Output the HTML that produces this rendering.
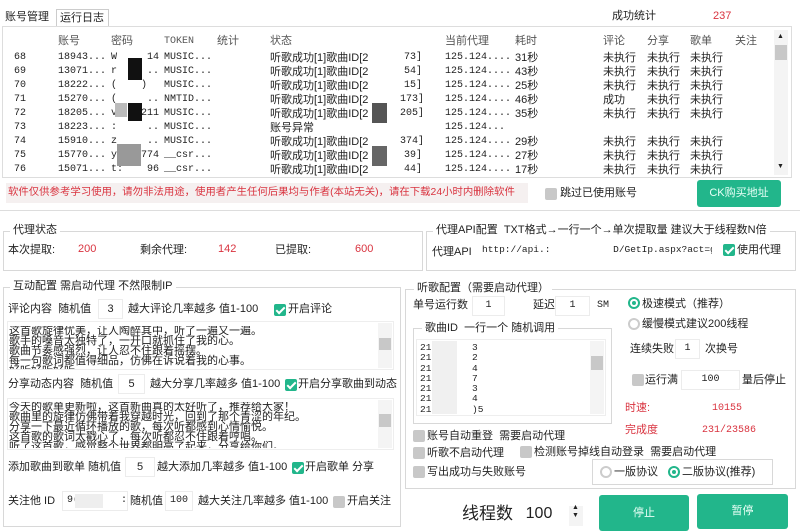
<!DOCTYPE html>
<html><head><meta charset="utf-8">
<style>
*{margin:0;padding:0;box-sizing:border-box}
body{width:800px;height:532px;background:#fff;position:relative;overflow:hidden;font-family:"Liberation Sans","Noto Sans CJK SC",sans-serif;font-size:11px;color:#222}
.t{position:absolute;white-space:nowrap;line-height:14px}
.m{font-family:"Liberation Mono","Noto Sans CJK SC",monospace;font-size:10px}
.r{color:#d9333f}
.box{position:absolute;border:1px solid #d8d8d8}
.inp{position:absolute;background:#fff;border:1px solid #ececec;text-align:center;line-height:18px;height:20px;white-space:nowrap;overflow:hidden}
.cb{position:absolute;width:12px;height:12px;background:#c8c8c8;border-radius:2px}
.cb.on{background:#22b68b}
.cb.on::after{content:"";position:absolute;left:4px;top:1px;width:3px;height:7px;border:solid #fff;border-width:0 2px 2px 0;transform:rotate(45deg)}
.rd{position:absolute;width:12px;height:12px;border-radius:50%;border:2px solid #ccc;background:#fff}
.rd.on{border-color:#22b68b}
.rd.on::after{content:"";position:absolute;left:2px;top:2px;width:4px;height:4px;border-radius:50%;background:#22b68b}
.btn{position:absolute;background:#22b68b;color:#e8fff6;border-radius:3px;text-align:center}
.leg{position:absolute;background:#fff;padding:0 3px;white-space:nowrap;line-height:14px}
.sb{position:absolute;background:#f4f4f4}
.ta{position:absolute;font-size:11px;line-height:10px;overflow:hidden;white-space:nowrap}
</style></head><body>
<div class="t" style="left:5px;top:10px;font-size:11px">账号管理</div>
<div style="position:absolute;left:56px;top:9px;width:53px;height:18px;border:1px solid #ccc;border-bottom:none"></div>
<div class="t" style="left:60px;top:11px">运行日志</div>
<div class="t" style="left:612px;top:9px">成功统计</div>
<div class="t r" style="left:713px;top:9px">237</div>
<div class="box" style="left:2px;top:26px;width:790px;height:152px;border-color:#ddd"></div>
<div class="t" style="left:58px;top:34px;color:#555">账号</div>
<div class="t" style="left:111px;top:34px;color:#555">密码</div>
<div class="t m" style="left:164px;top:35px;color:#555">TOKEN</div>
<div class="t" style="left:217px;top:34px;color:#555">统计</div>
<div class="t" style="left:270px;top:34px;color:#555">状态</div>
<div class="t" style="left:445px;top:34px;color:#555">当前代理</div>
<div class="t" style="left:515px;top:34px;color:#555">耗时</div>
<div class="t" style="left:603px;top:34px;color:#555">评论</div>
<div class="t" style="left:647px;top:34px;color:#555">分享</div>
<div class="t" style="left:690px;top:34px;color:#555">歌单</div>
<div class="t" style="left:735px;top:34px;color:#555">关注</div>
<div class="sb" style="left:774px;top:30px;width:14px;height:145px"></div>
<div class="t" style="left:777px;top:30px;font-size:7px">▲</div>
<div style="position:absolute;left:775px;top:45px;width:12px;height:15px;background:#c8c8c8"></div>
<div class="t" style="left:777px;top:160px;font-size:7px">▼</div>
<div class="t m" style="left:14px;top:51px;line-height:14px">68<br>69<br>70<br>71<br>72<br>73<br>74<br>75<br>76</div>
<div class="t m" style="left:58px;top:51px;line-height:14px">18943...<br>13071...<br>18222...<br>15270...<br>18205...<br>18223...<br>15910...<br>15770...<br>15071...</div>
<div class="t m" style="left:111px;top:51px;line-height:14px">W &nbsp; &nbsp; 14<br>r &nbsp; &nbsp; ..<br>( &nbsp; &nbsp;)<br>( &nbsp; &nbsp; ..<br>v &nbsp; &nbsp;211<br>: &nbsp; &nbsp; ..<br>z &nbsp; &nbsp; ..<br>y &nbsp; &nbsp;774<br>t: &nbsp; &nbsp;96</div>
<div style="position:absolute;left:128px;top:58px;width:14px;height:22px;background:#111"></div>
<div style="position:absolute;left:115px;top:103px;width:12px;height:14px;background:#bbb"></div>
<div style="position:absolute;left:128px;top:103px;width:14px;height:18px;background:#111"></div>
<div style="position:absolute;left:117px;top:144px;width:24px;height:22px;background:#999"></div>
<div class="t m" style="left:164px;top:51px;line-height:14px">MUSIC...<br>MUSIC...<br>MUSIC...<br>NMTID...<br>MUSIC...<br>MUSIC...<br>MUSIC...<br>__csr...<br>__csr...</div>
<div class="t" style="left:270px;top:51px;line-height:14px">听歌成功[1]歌曲ID[2<br>听歌成功[1]歌曲ID[2<br>听歌成功[1]歌曲ID[2<br>听歌成功[1]歌曲ID[2<br>听歌成功[1]歌曲ID[2<br>账号异常<br>听歌成功[1]歌曲ID[2<br>听歌成功[1]歌曲ID[2<br>听歌成功[1]歌曲ID[2</div>
<div style="position:absolute;left:372px;top:103px;width:15px;height:20px;background:#555"></div>
<div style="position:absolute;left:372px;top:146px;width:15px;height:20px;background:#666"></div>
<div class="t m" style="left:400px;top:51px;line-height:14px;text-align:right;width:22px">73]<br>54]<br>15]<br>173]<br>205]<br>&nbsp;<br>374]<br>39]<br>44]</div>
<div class="t m" style="left:445px;top:51px;line-height:14px">125.124....<br>125.124....<br>125.124....<br>125.124....<br>125.124....<br>125.124...<br>125.124....<br>125.124....<br>125.124....</div>
<div class="t" style="left:515px;top:51px;line-height:14px">31秒<br>43秒<br>25秒<br>46秒<br>35秒<br>&nbsp;<br>29秒<br>27秒<br>17秒</div>
<div class="t" style="left:603px;top:51px;line-height:14px">未执行<br>未执行<br>未执行<br>成功<br>未执行<br>&nbsp;<br>未执行<br>未执行<br>未执行</div>
<div class="t" style="left:647px;top:51px;line-height:14px">未执行<br>未执行<br>未执行<br>未执行<br>未执行<br>&nbsp;<br>未执行<br>未执行<br>未执行</div>
<div class="t" style="left:690px;top:51px;line-height:14px">未执行<br>未执行<br>未执行<br>未执行<br>未执行<br>&nbsp;<br>未执行<br>未执行<br>未执行</div>
<div style="position:absolute;left:6px;top:183px;width:522px;height:20px;background:#f5f0f0"></div>
<div class="t r" style="left:8px;top:186px;font-size:10.4px">软件仅供参考学习使用，请勿非法用途，使用者产生任何后果均与作者(本站无关)，请在下载24小时内删除软件</div>
<div class="cb" style="left:545px;top:188px"></div>
<div class="t" style="left:560px;top:186px">跳过已使用账号</div>
<div class="btn" style="left:697px;top:180px;width:84px;height:27px;line-height:27px;font-size:11px">CK购买地址</div>
<div style="position:absolute;left:0;top:210px;width:800px;height:1px;background:#ddd"></div>
<div class="box" style="left:3px;top:231px;width:420px;height:40px"></div>
<div class="leg" style="left:10px;top:223px">代理状态</div>
<div class="t" style="left:8px;top:243px">本次提取:</div>
<div class="t r" style="left:78px;top:242px">200</div>
<div class="t" style="left:140px;top:243px">剩余代理:</div>
<div class="t r" style="left:218px;top:242px">142</div>
<div class="t" style="left:275px;top:243px">已提取:</div>
<div class="t r" style="left:355px;top:242px">600</div>
<div class="box" style="left:426px;top:231px;width:370px;height:40px"></div>
<div class="leg" style="left:433px;top:223px">代理API配置 &nbsp;TXT格式→一行一个→单次提取量 建议大于线程数N倍</div>
<div class="t" style="left:432px;top:245px">代理API</div>
<div class="inp m" style="left:480px;top:241px;width:232px;text-align:left;padding-left:2px;border:none;font-size:9.5px">http://api.: &nbsp; &nbsp; &nbsp; &nbsp; &nbsp; D/GetIp.aspx?act=gett</div>
<div class="cb on" style="left:723px;top:244px"></div>
<div class="t" style="left:737px;top:243px">使用代理</div>
<div class="box" style="left:3px;top:287px;width:398px;height:240px"></div>
<div class="leg" style="left:10px;top:279px">互动配置 需启动代理 不然限制IP</div>
<div class="t" style="left:8px;top:302px">评论内容 &nbsp;随机值</div>
<div class="inp" style="left:98px;top:299px;width:25px">3</div>
<div class="t" style="left:128px;top:302px">越大评论几率越多 值1-100</div>
<div class="cb on" style="left:274px;top:304px"></div>
<div class="t" style="left:288px;top:302px">开启评论</div>
<div style="position:absolute;left:7px;top:321px;width:387px;height:49px;background:#fff;border:1px solid #eee"></div>
<div class="ta" style="left:9px;top:326px;width:368px;height:43px">这首歌旋律优美，让人陶醉其中，听了一遍又一遍。<br>歌手的嗓音太独特了，一开口就抓住了我的心。<br>歌曲节奏感强烈，让人忍不住跟着摇摆。<br>每一句歌词都值得细品，仿佛在诉说着我的心事。<br>好听好听好听</div>
<div class="sb" style="left:378px;top:323px;width:14px;height:45px"></div>
<div style="position:absolute;left:379px;top:338px;width:12px;height:12px;background:#c8c8c8"></div>
<div class="t" style="left:8px;top:377px">分享动态内容 &nbsp;随机值</div>
<div class="inp" style="left:118px;top:374px;width:27px">5</div>
<div class="t" style="left:150px;top:377px">越大分享几率越多 值1-100</div>
<div class="cb on" style="left:285px;top:379px"></div>
<div class="t" style="left:298px;top:377px">开启分享歌曲到动态</div>
<div style="position:absolute;left:7px;top:398px;width:387px;height:52px;background:#fff;border:1px solid #eee"></div>
<div class="ta" style="left:9px;top:402px;width:368px;height:46px">今天的歌单更新啦，这首新曲真的太好听了，推荐给大家！<br>歌曲里的旋律仿佛带着我穿越时光，回到了那个青涩的年纪。<br>分享一下最近循环播放的歌，每次听都感到心情愉悦。<br>这首歌的歌词太戳心了，每次听都忍不住跟着哼唱。<br>听了这首歌，感觉整个世界都明亮了起来，分享给你们。</div>
<div class="sb" style="left:378px;top:400px;width:14px;height:48px"></div>
<div style="position:absolute;left:379px;top:414px;width:12px;height:13px;background:#c8c8c8"></div>
<div class="t" style="left:8px;top:460px">添加歌曲到歌单 随机值</div>
<div class="inp" style="left:125px;top:457px;width:30px">5</div>
<div class="t" style="left:157px;top:460px">越大添加几率越多 值1-100</div>
<div class="cb on" style="left:292px;top:462px"></div>
<div class="t" style="left:305px;top:460px">开启歌单 分享</div>
<div class="t" style="left:8px;top:494px">关注他 ID</div>
<div class="inp m" style="left:62px;top:491px;width:66px;text-align:left;padding-left:4px">9( &nbsp; &nbsp; &nbsp; :18</div>
<div style="position:absolute;left:75px;top:494px;width:28px;height:14px;background:#eee"></div>
<div class="t" style="left:130px;top:494px">随机值</div>
<div class="inp m" style="left:165px;top:491px;width:28px">100</div>
<div class="t" style="left:198px;top:494px">越大关注几率越多 值1-100</div>
<div class="cb" style="left:333px;top:496px"></div>
<div class="t" style="left:347px;top:494px">开启关注</div>
<div class="box" style="left:405px;top:289px;width:391px;height:200px"></div>
<div class="leg" style="left:414px;top:281px">听歌配置（需要启动代理）</div>
<div class="t" style="left:413px;top:298px">单号运行数</div>
<div class="inp m" style="left:472px;top:296px;width:33px">1</div>
<div class="t" style="left:533px;top:298px">延迟</div>
<div class="inp m" style="left:555px;top:296px;width:35px">1</div>
<div class="t m" style="left:597px;top:299px">SM</div>
<div class="rd on" style="left:628px;top:297px"></div>
<div class="t" style="left:642px;top:297px">极速模式（推荐）</div>
<div class="rd" style="left:628px;top:318px"></div>
<div class="t" style="left:642px;top:317px">缓慢模式建议200线程</div>
<div class="box" style="left:413px;top:328px;width:199px;height:96px"></div>
<div class="leg" style="left:422px;top:321px">歌曲ID &nbsp;一行一个 随机调用</div>
<div style="position:absolute;left:416px;top:339px;width:190px;height:77px;background:#fff;border:1px solid #eee"></div>
<div class="ta m" style="left:420px;top:343px;line-height:10.3px;font-size:9.5px">21<br>21<br>21<br>21<br>21<br>21<br>21</div>
<div style="position:absolute;left:432px;top:341px;width:25px;height:73px;background:#f0f0f0"></div>
<div class="ta m" style="left:472px;top:343px;line-height:10.3px;font-size:9.5px">3<br>2<br>4<br>7<br>3<br>4<br>)5</div>
<div class="sb" style="left:590px;top:341px;width:14px;height:73px"></div>
<div style="position:absolute;left:591px;top:356px;width:12px;height:14px;background:#c8c8c8"></div>
<div class="t" style="left:630px;top:342px">连续失败</div>
<div class="inp m" style="left:675px;top:339px;width:25px">1</div>
<div class="t" style="left:705px;top:342px">次换号</div>
<div class="cb" style="left:632px;top:374px"></div>
<div class="t" style="left:645px;top:373px">运行满</div>
<div class="inp m" style="left:681px;top:370px;width:59px">100</div>
<div class="t" style="left:742px;top:373px">量后停止</div>
<div class="t r" style="left:625px;top:401px">时速:</div>
<div class="t r m" style="left:712px;top:402px">10155</div>
<div class="t r" style="left:625px;top:423px">完成度</div>
<div class="t r m" style="left:702px;top:424px">231/23586</div>
<div class="cb" style="left:413px;top:430px"></div>
<div class="t" style="left:427px;top:429px">账号自动重登 &nbsp;需要启动代理</div>
<div class="cb" style="left:413px;top:447px"></div>
<div class="t" style="left:427px;top:446px">听歌不启动代理</div>
<div class="cb" style="left:520px;top:446px"></div>
<div class="t" style="left:534px;top:445px">检测账号掉线自动登录 &nbsp;需要启动代理</div>
<div class="cb" style="left:413px;top:466px"></div>
<div class="t" style="left:427px;top:465px">写出成功与失败账号</div>
<div class="box" style="left:592px;top:459px;width:181px;height:26px"></div>
<div class="rd" style="left:600px;top:466px"></div>
<div class="t" style="left:614px;top:465px">一版协议</div>
<div class="rd on" style="left:668px;top:466px"></div>
<div class="t" style="left:682px;top:465px">二版协议(推荐)</div>
<div class="t" style="left:462px;top:503px;font-size:17px;line-height:22px">线程数</div>
<div class="inp" style="left:517px;top:502px;width:44px;height:26px;line-height:24px;font-size:16px;border:none">100</div>
<div class="sb" style="left:569px;top:506px;width:14px;height:20px"></div>
<div class="t" style="left:572px;top:504px;font-size:7px;line-height:8px">▲<br>▼</div>
<div class="btn" style="left:599px;top:495px;width:90px;height:36px;line-height:36px">停止</div>
<div class="btn" style="left:697px;top:494px;width:91px;height:35px;line-height:35px">暂停</div>
</body></html>
